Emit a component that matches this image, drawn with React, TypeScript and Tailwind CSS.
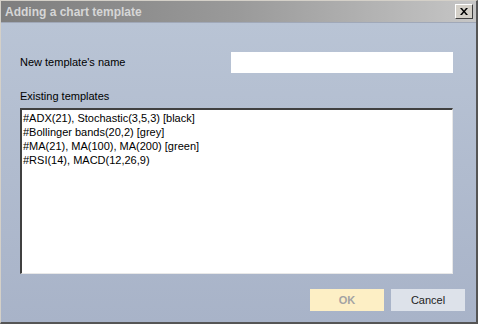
import React, { useState } from 'react';

const templates = [
  '#ADX(21), Stochastic(3,5,3) [black]',
  '#Bollinger bands(20,2) [grey]',
  '#MA(21), MA(100), MA(200) [green]',
  '#RSI(14), MACD(12,26,9)',
];

const App: React.FC = () => {
  const [name, setName] = useState('');

  return (
    <div className="w-[478px] h-[324px] flex flex-col bg-[#808080] border-l border-t border-[#d4d0c8] border-r-2 border-b-2 border-r-[#555] border-b-[#555] overflow-hidden" style={{ fontFamily: 'Tahoma, "Liberation Sans", sans-serif' }}>
      {/* title bar */}
      <div className="h-[21px] flex items-center justify-between pl-[4px] pr-[3px] bg-gradient-to-r from-[#7e7e7e] via-[#9a9a9a] to-[#c6c6c6]">
        <span className="text-[12px] font-bold text-[#d6d6d6] leading-none">Adding a chart template</span>
        <button className="w-[18px] h-[15px] flex items-center justify-center bg-[#d4d0c8] border border-t-white border-l-white border-r-[#404040] border-b-[#404040]">
          <svg width="8" height="7" viewBox="0 0 8 7">
            <path d="M0 0h2l2 2.5L6 0h2L5 3.5 8 7H6L4 4.5 2 7H0l3-3.5z" fill="#000" />
          </svg>
        </button>
      </div>

      {/* body */}
      <div className="flex-1 flex flex-col bg-gradient-to-b from-[#b9c4d5] to-[#a8b3c8] border-t border-[#a0a8b8] pl-[19px] pr-[23px] text-[11px] text-black">
        <div className="flex items-center justify-between mt-[29px] h-[21px]">
          <span>New template's name</span>
          <input
            value={name}
            onChange={(e) => setName(e.target.value)}
            className="w-[222px] h-[21px] bg-white outline-none px-1 text-[11px]"
          />
        </div>

        <div className="mt-[17px] mb-[5px] leading-[13px]">Existing templates</div>

        <div className="w-[433px] h-[166px] bg-white border-t-2 border-l-2 border-[#404040] border-r border-b border-r-[#e8e8e8] border-b-[#e8e8e8] px-[1px] pt-[1px] text-[11px] leading-[14px]">
          {templates.map((t) => (
            <div key={t}>{t}</div>
          ))}
        </div>

        <div className="flex justify-end gap-[7px] mt-[15px] mr-[-12px]">
          <button className="w-[74px] h-[22px] bg-[#fdefc5] text-[#a3a3a3] font-bold text-[11px]">OK</button>
          <button className="w-[74px] h-[22px] bg-[#dde2ea] text-[#222] text-[11px]">Cancel</button>
        </div>
      </div>
    </div>
  );
};

export default App;
